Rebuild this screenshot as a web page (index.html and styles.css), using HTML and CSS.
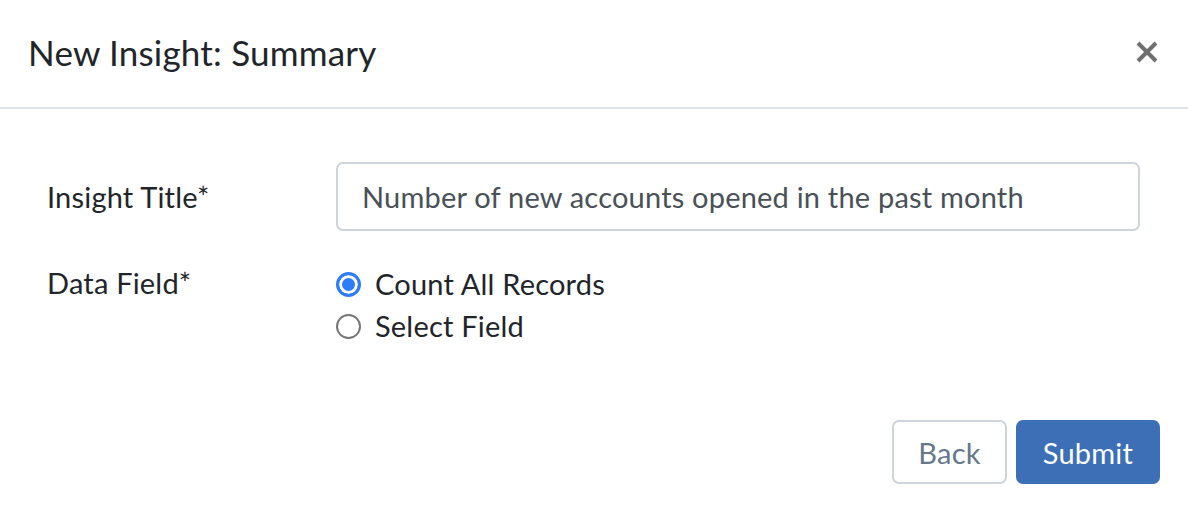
FILE: index.html
```html
<!DOCTYPE html>
<html>
<head>
<meta charset="utf-8">
<link rel="stylesheet" href="styles.css">
</head>
<body>
<div class="modal">
  <div class="modal-header">
    <h1 class="modal-title">New Insight: Summary</h1>
    <button class="close" aria-label="Close">
      <svg width="22" height="22" viewBox="0 0 22 22"><path d="M2 2 L20 20 M20 2 L2 20" stroke="#6f6f6f" stroke-width="4" stroke-linecap="butt"/></svg>
    </button>
  </div>
  <div class="modal-body">
    <div class="form-row center">
      <label class="form-label">Insight Title*</label>
      <div class="input">Number of new accounts opened in the past month</div>
    </div>
    <div class="form-row">
      <label class="form-label">Data Field*</label>
      <div class="radios">
        <div class="radio-item"><span class="radio checked"></span><span>Count All Records</span></div>
        <div class="radio-item"><span class="radio"></span><span>Select Field</span></div>
      </div>
    </div>
  </div>
  <div class="modal-footer">
    <button class="btn btn-back">Back</button>
    <button class="btn btn-submit">Submit</button>
  </div>
</div>
</body>
</html>
```
FILE: styles.css
```css
* { box-sizing: border-box; }
html, body { margin: 0; padding: 0; background: #fff; }
body { font-family: Lato, "Noto Sans", sans-serif; color: #212529; width: 1188px; height: 516px; overflow: hidden; letter-spacing: 0.2px; }
.modal { display: flex; flex-direction: column; }
.modal-header {
  height: 109px;
  border-bottom: 2px solid #dee2e6;
  display: flex;
  align-items: center;
  justify-content: space-between;
  padding: 0 30px 4px 28px;
}
.modal-title { margin: 0; font-weight: 400; font-size: 35px; letter-spacing: 0.2px; color: #212529; }
.close { background: none; border: 0; padding: 0; display: flex; cursor: pointer; }
.modal-body { padding: 53px 48px 0 47px; display: flex; flex-direction: column; gap: 31px; }
.form-row { display: grid; grid-template-columns: 289px 1fr; align-items: start; }
.form-row.center { align-items: center; }
.form-label { font-size: 29px; color: #212529; line-height: 42px; }
.input {
  height: 69px;
  border: 2px solid #ced4da;
  border-radius: 7px;
  padding: 0 24px;
  display: flex;
  align-items: center;
  font-size: 29px;
  color: #495057;
}
.radios { display: flex; flex-direction: column; padding-top: 1px; }
.radio-item { display: flex; align-items: center; gap: 14px; font-size: 29px; line-height: 42px; color: #212529; }
.radio {
  width: 25px; height: 25px; border-radius: 50%;
  border: 2px solid #767676; background: #fff; flex: none;
}
.radio.checked { border: 3px solid #2f7df6; box-shadow: inset 0 0 0 3px #fff; background: #2f7df6; }
.modal-footer { display: flex; justify-content: flex-end; gap: 9px; padding: 0 28px 0 0; margin-top: 73px; }
.btn { height: 64px; font-family: inherit; font-size: 29px; letter-spacing: 0.2px; border-radius: 7px; padding: 0; cursor: pointer; }
.btn-back { width: 115px; background: #fff; border: 2px solid #ced4da; color: #66778a; }
.btn-submit { width: 144px; background: #3c6fb6; border: 2px solid #3c6fb6; color: #fff; }
```
